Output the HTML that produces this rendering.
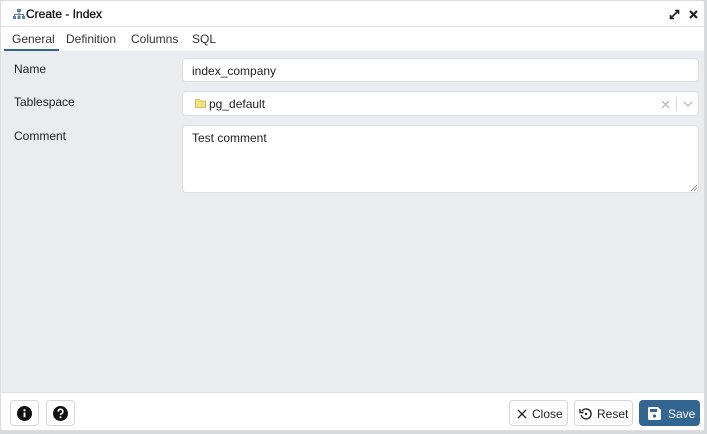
<!DOCTYPE html>
<html><head><style>
*{box-sizing:border-box;margin:0;padding:0}
body{width:707px;height:434px;background:#d8d9dc;font-family:"Liberation Sans",sans-serif;font-size:12px;color:#222;position:relative;overflow:hidden}
.dlg{position:absolute;left:0;top:0;width:705px;height:431px;background:#fff;border:1px solid #ddd;border-radius:3px;overflow:hidden}
.title{position:absolute;left:0;top:0;right:0;height:26px;border-bottom:1px solid #e3e3e3}
.title span{position:absolute;left:25px;top:6px;font-size:12px;color:#111;-webkit-text-stroke:0.3px #111}
.tabs{position:absolute;left:0;top:26px;right:0;height:24px;}
.tab{position:absolute;top:5px;font-size:12px;color:#333}
.ul{position:absolute;left:3px;top:48px;width:55px;height:2px;background:#326690}
.content{position:absolute;left:0;top:50px;right:0;height:341px;background:#ebecf0}
.lbl{position:absolute;left:13px;font-size:12px;color:#222}
.inp{position:absolute;left:181px;width:517px;background:#fff;border:1px solid #dde0e6;border-radius:4px}
.foot{position:absolute;left:0;top:391px;right:0;height:40px;background:#fff;border-top:1px solid #e3e3e3}
.btn{position:absolute;top:7px;height:26px;border:1px solid #d6d6d6;border-radius:4px;background:#fff;font-size:12px;color:#222}
</style></head><body>
<div class="dlg">
<div class="title">
<svg style="position:absolute;left:12px;top:8px" width="12" height="11" viewBox="0 0 12 11"><g fill="#5a7fb0"><rect x="4" y="0" width="4" height="3"/><rect x="0" y="7" width="3" height="3"/><rect x="4.5" y="7" width="3" height="3"/><rect x="9" y="7" width="3" height="3"/><rect x="5.5" y="3" width="1" height="2"/><rect x="1" y="5" width="10" height="1"/><rect x="1" y="5" width="1" height="2"/><rect x="10" y="5" width="1" height="2"/><rect x="5.5" y="5" width="1" height="2"/></g></svg>
<span>Create - Index</span>
<svg style="position:absolute;left:668px;top:8px" width="11" height="11" viewBox="0 0 11 11"><path d="M2 9L9 2M6 1.5h3.5v3.5M1.5 6v3.5h3.5" stroke="#222" stroke-width="1.6" fill="none"/></svg>
<svg style="position:absolute;left:688px;top:9px" width="9" height="9" viewBox="0 0 9 9"><path d="M1 1L8 8M8 1L1 8" stroke="#222" stroke-width="2.2"/></svg>
</div>
<div class="tabs">
<div class="tab" style="left:11px">General</div>
<div class="tab" style="left:65px">Definition</div>
<div class="tab" style="left:130px">Columns</div>
<div class="tab" style="left:191px">SQL</div>
</div>
<div class="ul"></div>
<div class="content">
<div class="lbl" style="top:11px">Name</div>
<div class="lbl" style="top:44px">Tablespace</div>
<div class="lbl" style="top:78px">Comment</div>
<div class="inp" style="top:7px;height:24px"><span style="position:absolute;left:9px;top:5px">index_company</span></div>
<div class="inp" style="top:40px;height:25px">
<svg style="position:absolute;left:12px;top:7px" width="11" height="9" viewBox="0 0 11 9"><path d="M0.5 0.5h4l1 1.5h5v6.5h-10z" fill="#f5e07a" stroke="#c8b14a" stroke-width="0.8"/></svg>
<span style="position:absolute;left:26px;top:5px">pg_default</span>
<svg style="position:absolute;left:478px;top:8px" width="9" height="9" viewBox="0 0 9 9"><path d="M1 1L8 8M8 1L1 8" stroke="#bbb" stroke-width="1.4"/></svg>
<div style="position:absolute;left:493px;top:5px;width:1px;height:14px;background:#ddd"></div>
<svg style="position:absolute;left:500px;top:9px" width="10" height="6" viewBox="0 0 10 6"><path d="M1 1L5 5L9 1" stroke="#bbb" stroke-width="1.3" fill="none"/></svg>
</div>
<div class="inp" style="top:74px;height:68px"><span style="position:absolute;left:9px;top:5px">Test comment</span>
<svg style="position:absolute;right:1px;bottom:1px" width="6" height="6" viewBox="0 0 6 6"><path d="M0 6L6 0M3 6L6 3" stroke="#888" stroke-width="0.8"/></svg></div>
</div>
<div class="foot">
<div class="btn" style="left:9px;width:29px"><svg style="position:absolute;left:6px;top:5px" width="15" height="15" viewBox="0 0 16 16"><circle cx="8" cy="8" r="8" fill="#111"/><rect x="7" y="7" width="2" height="5" fill="#fff"/><circle cx="8" cy="4.5" r="1.2" fill="#fff"/></svg></div>
<div class="btn" style="left:45px;width:29px"><svg style="position:absolute;left:6px;top:5px" width="15" height="15" viewBox="0 0 16 16"><circle cx="8" cy="8" r="8" fill="#111"/><path d="M5.5 6a2.5 2.5 0 1 1 3.3 2.3c-.6.3-.8.6-.8 1.3" stroke="#fff" stroke-width="1.8" fill="none"/><circle cx="8" cy="12" r="1.1" fill="#fff"/></svg></div>
<div class="btn" style="left:508px;width:59px"><svg style="position:absolute;left:7px;top:8px" width="10" height="10" viewBox="0 0 10 10"><path d="M1 1L9 9M9 1L1 9" stroke="#222" stroke-width="1.3"/></svg><span style="position:absolute;left:22px;top:6px">Close</span></div>
<div class="btn" style="left:573px;width:59px"><svg style="position:absolute;left:4px;top:6px" width="14" height="14" viewBox="0 0 14 14"><path d="M3 4A5 5 0 1 1 2.2 8" stroke="#222" stroke-width="1.4" fill="none"/><path d="M1 2v3.5h3.5" stroke="#222" stroke-width="1.4" fill="none"/><circle cx="7" cy="7" r="1.2" fill="#222"/></svg><span style="position:absolute;left:22px;top:6px">Reset</span></div>
<div class="btn" style="left:638px;width:61px;background:#326690;border-color:#326690;color:#fff"><svg style="position:absolute;left:8px;top:6px" width="13" height="13" viewBox="0 0 13 13"><path d="M0 1.5Q0 0 1.5 0H10L13 3V11.5Q13 13 11.5 13H1.5Q0 13 0 11.5z" fill="#fff"/><rect x="2" y="2" width="7" height="3" fill="#326690"/><circle cx="6.5" cy="9" r="1.6" fill="#326690"/></svg><span style="position:absolute;left:28px;top:6px">Save</span></div>
</div>
</div>
</body></html>
